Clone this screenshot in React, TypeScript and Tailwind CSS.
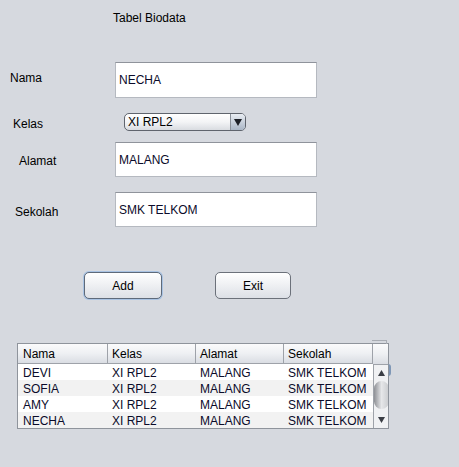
import React from "react";

const font = { fontFamily: '"Liberation Sans", Arial, sans-serif' };

function Field({ value }: { value: string }) {
  return (
    <div className="ml-auto mr-[142px] h-full w-[202px] border border-[#b5b9c0] border-t-[#8f939b] bg-white pl-[3px] flex items-center text-[12px] text-[#0b0b2a]">
      {value}
    </div>
  );
}

const rows = [
  ["DEVI", "XI RPL2", "MALANG", "SMK TELKOM"],
  ["SOFIA", "XI RPL2", "MALANG", "SMK TELKOM"],
  ["AMY", "XI RPL2", "MALANG", "SMK TELKOM"],
  ["NECHA", "XI RPL2", "MALANG", "SMK TELKOM"],
];
const widths = ["w-[90px]", "w-[88px]", "w-[88px]", "w-[89px]"];

export default function App() {
  return (
    <div className="w-[459px] h-[467px] bg-[#d6d9df] text-black text-[12px] leading-[14px] overflow-hidden" style={font}>
      <div className="pt-[11px] pl-[113px] h-[24px]">Tabel Biodata</div>

      {/* Nama */}
      <div className="mt-[38px] h-[36px] flex">
        <div className="pl-[10px] pt-[9px]">Nama</div>
        <Field value="NECHA" />
      </div>

      {/* Kelas */}
      <div className="mt-[15px] h-[18px] flex">
        <div className="pl-[13px] w-[124px] leading-[14px] h-[18px] pt-[4px]">Kelas</div>
        <div className="w-[122px] h-[18px] rounded-[5px] border border-[#5f646d] bg-gradient-to-b from-white via-[#f3f4f6] to-[#d9dce1] flex items-center overflow-hidden">
          <div className="flex-1 pl-[3px] text-[12px] leading-[14px]">XI RPL2</div>
          <div className="w-[15px] h-full border-l border-[#8a9099] bg-gradient-to-b from-[#e9edf3] to-[#aab6c6] flex items-center justify-center">
            <svg width="8" height="7" viewBox="0 0 8 7"><path d="M0 0H8L4 7Z" fill="#1c1f26" /></svg>
          </div>
        </div>
      </div>

      {/* Alamat */}
      <div className="mt-[11px] h-[35px] flex">
        <div className="pl-[19px] pt-[12px]">Alamat</div>
        <Field value="MALANG" />
      </div>

      {/* Sekolah */}
      <div className="mt-[15px] h-[35px] flex">
        <div className="pl-[15px] pt-[13px]">Sekolah</div>
        <Field value="SMK TELKOM" />
      </div>

      {/* Buttons */}
      <div className="mt-[44px] h-[28px] flex items-start">
        <div className="ml-[83px] w-[80px] h-[29px] rounded-[6px] bg-[#a9c3e3] p-[1px]">
          <div className="w-full h-full rounded-[5px] border border-[#5e6a7a] bg-gradient-to-b from-white to-[#dde0e6] flex items-center justify-center">Add</div>
        </div>
        <div className="ml-[52px] mt-[1px] w-[76px] h-[27px] rounded-[5px] border border-[#6c717a] bg-gradient-to-b from-white to-[#dde0e6] flex items-center justify-center">Exit</div>
      </div>

      {/* Table */}
      <div className="relative mt-[44px] ml-[17px] w-[372px] h-[86px]">
        <div className="absolute left-[355px] top-[-3px] w-[15px] h-[4px] border-t border-r border-[#a9adb4]" />
        <div className="absolute left-[371px] top-[21px] w-[3px] h-[12px] border-r-2 border-[#7f97b6] rounded-r-full" />
        <div className="w-full h-full border border-[#8f949c] flex bg-white overflow-hidden">
          <div className="flex flex-col">
            <div className="flex h-[21px] bg-gradient-to-b from-[#fbfbfc] via-[#eef0f3] to-[#dadde3] border-b border-[#9ea2a9]">
              {["Nama", "Kelas", "Alamat", "Sekolah"].map((h, i) => (
                <div key={h} className={`${widths[i]} ${i === 0 ? "pl-[5px]" : "pl-[4px]"} pt-[1px] border-r border-[#9ea2a9] flex items-center`}>{h}</div>
              ))}
            </div>
            {rows.map((r, ri) => (
              <div key={ri} className={`flex h-[16px] ${ri % 2 === 1 ? "bg-[#f2f2f2]" : "bg-white"}`}>
                {r.map((c, ci) => (
                  <div key={ci} className={`${widths[ci]} ${ci === 0 ? "pl-[5px]" : "pl-[4px]"} pt-[2px] flex items-center text-[#0b0b2a]`}>{c}</div>
                ))}
              </div>
            ))}
          </div>
          <div className="flex flex-col w-[16px]">
            <div className="h-[21px] bg-gradient-to-b from-[#fbfbfc] via-[#eef0f3] to-[#dadde3] border-b border-[#9ea2a9]" />
            <div className="flex-1 bg-[#f0f1f3] border-l border-[#9ea2a9] flex flex-col items-center">
              <div className="h-[16px] flex items-center justify-center">
                <svg width="7" height="6" viewBox="0 0 7 6"><path d="M3.5 0L7 6H0Z" fill="#3a3d44" /></svg>
              </div>
              <div className="w-[15px] h-[28px] rounded-[14px] bg-gradient-to-r from-[#8e9095] via-[#e6e7e9] to-[#c9cbce]" />
              <div className="mt-auto h-[16px] flex items-center justify-center">
                <svg width="7" height="6" viewBox="0 0 7 6"><path d="M0 0H7L3.5 6Z" fill="#3a3d44" /></svg>
              </div>
            </div>
          </div>
        </div>
      </div>
    </div>
  );
}
